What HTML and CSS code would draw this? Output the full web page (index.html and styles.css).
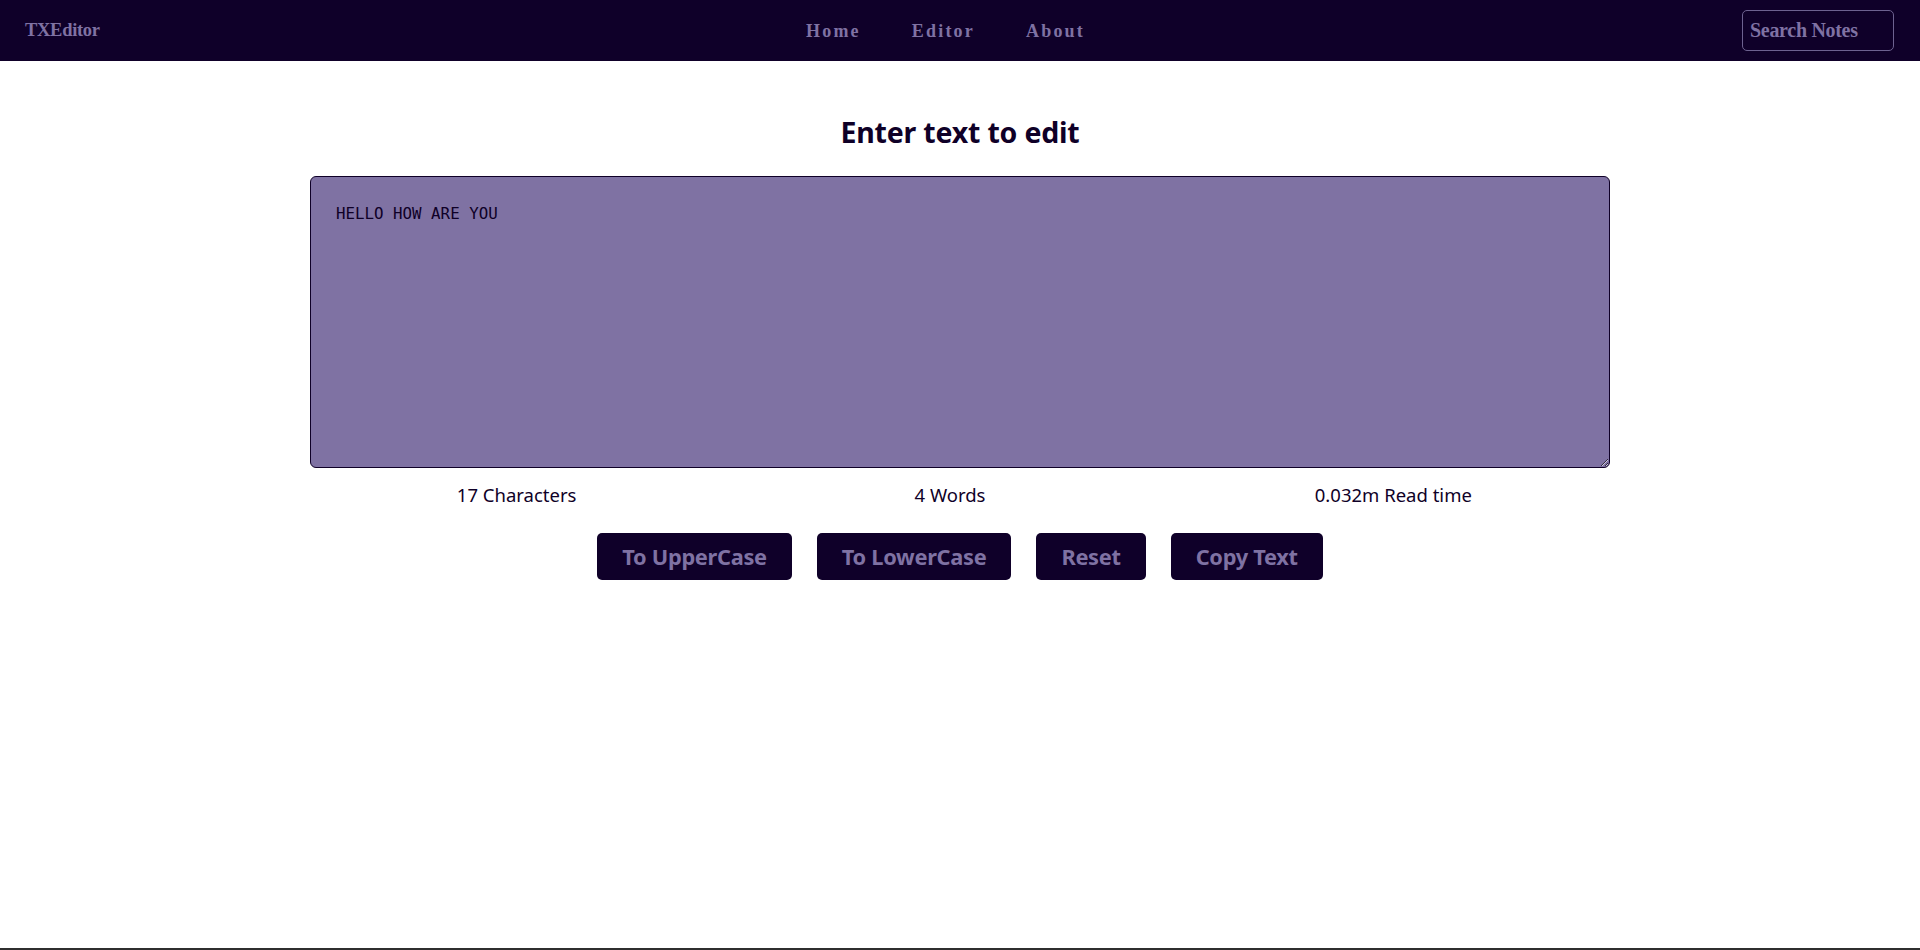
FILE: index.html
```html
<!DOCTYPE html>
<html lang="en">
<head>
<meta charset="utf-8">
<title>TXEditor</title>
<link rel="stylesheet" href="styles.css">
</head>
<body>
<nav class="navbar">
  <a class="brand" href="#">TXEditor</a>
  <ul class="nav-links">
    <li><a href="#">Home</a></li>
    <li><a href="#">Editor</a></li>
    <li><a href="#">About</a></li>
  </ul>
  <div class="search-wrap">
    <input class="search" type="text" placeholder="Search Notes">
  </div>
</nav>
<main class="main">
  <div class="container">
    <h1 class="title">Enter text to edit</h1>
    <textarea class="editor" spellcheck="false">HELLO HOW ARE YOU</textarea>
    <div class="stats">
      <span>17 Characters</span>
      <span>4 Words</span>
      <span>0.032m Read time</span>
    </div>
    <div class="actions">
      <button class="btn">To UpperCase</button>
      <button class="btn">To LowerCase</button>
      <button class="btn">Reset</button>
      <button class="btn">Copy Text</button>
    </div>
  </div>
</main>
<div class="edge"></div>
</body>
</html>
```
FILE: styles.css
```css
* { box-sizing: border-box; }
html, body { height: 100%; }
body {
  margin: 0;
  display: flex;
  flex-direction: column;
  font-family: "Noto Sans", "Open Sans", sans-serif;
  color: #0f0027;
  background: #fff;
}
.navbar {
  height: 61px;
  background: #0f0029;
  display: grid;
  grid-template-columns: 1fr auto 1fr;
  align-items: center;
  padding: 0 26px 0 25px;
}
.brand {
  font-family: "Liberation Serif", serif;
  font-weight: bold;
  font-size: 18.5px;
  color: #7f72a3;
  text-decoration: none;
  letter-spacing: -0.3px;
}
.nav-links {
  list-style: none;
  margin: 0 28px 0 0;
  padding: 0;
  display: flex;
  gap: 51px;
}
.nav-links a {
  font-family: "Liberation Serif", serif;
  font-weight: bold;
  font-size: 18px;
  letter-spacing: 2.2px;
  color: #7f72a3;
  text-decoration: none;
}
.search-wrap { display: flex; justify-content: flex-end; }
.search {
  width: 152px;
  height: 41px;
  background: transparent;
  border: 1px solid #6d6290;
  border-radius: 5px;
  padding: 0 7px;
  font-family: "Liberation Serif", serif;
  font-weight: bold;
  font-size: 20px;
  letter-spacing: -0.3px;
  color: #7f72a3;
  outline: none;
}
.search::placeholder { color: #7f72a3; opacity: 1; }
.main { flex: 1; }
.container {
  width: 1300px;
  margin: 0 auto;
  display: flex;
  flex-direction: column;
  align-items: center;
}
.title {
  margin: 53px 0 26px;
  font-size: 28.5px;
  font-weight: bold;
  line-height: 36px;
  letter-spacing: -0.2px;
}
.editor {
  width: 1300px;
  height: 292px;
  background: #7f72a3;
  border: 1px solid #0f0027;
  border-radius: 6px;
  padding: 26px 25px;
  font-family: "DejaVu Sans Mono", monospace;
  font-size: 15.8px;
  line-height: 22px;
  color: #0f0027;
  outline: none;
  resize: vertical;
}
.stats {
  width: 100%;
  display: grid;
  grid-template-columns: repeat(3, 1fr);
  margin-top: 14px;
  font-size: 18.5px;
  line-height: 26px;
  text-align: center;
}
.stats span:first-child { margin-right: 20px; }
.stats span:nth-child(2) { margin-right: 20px; }
.actions {
  display: flex;
  gap: 25px;
  margin-top: 25px;
}
.btn {
  height: 47px;
  padding: 0 25px;
  background: #0f0029;
  color: #7f72a3;
  border: none;
  border-radius: 5px;
  font-family: "Noto Sans", "Open Sans", sans-serif;
  font-weight: bold;
  font-size: 21.8px;
  letter-spacing: -0.3px;
  cursor: pointer;
}
.edge {
  height: 2px;
  background: #2f2f2f;
}
```
